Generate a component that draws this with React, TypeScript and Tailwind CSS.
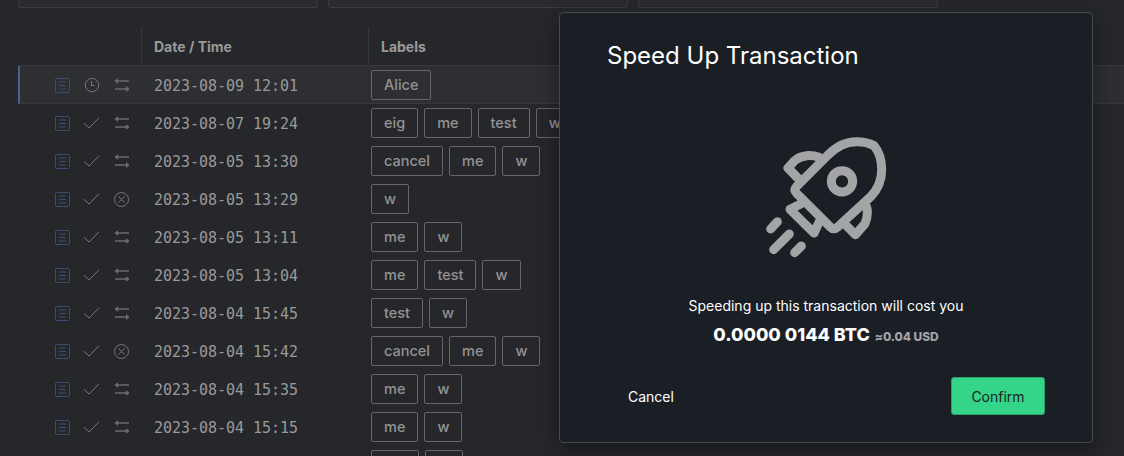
import React from "react";

type Kind = "swap" | "canceled";
interface Tx {
  time: string;
  labels: string[];
  kind: Kind;
  pending?: boolean;
}

const transactions: Tx[] = [
  { time: "2023-08-09 12:01", labels: ["Alice"], kind: "swap", pending: true },
  { time: "2023-08-07 19:24", labels: ["eig", "me", "test", "w"], kind: "swap" },
  { time: "2023-08-05 13:30", labels: ["cancel", "me", "w"], kind: "swap" },
  { time: "2023-08-05 13:29", labels: ["w"], kind: "canceled" },
  { time: "2023-08-05 13:11", labels: ["me", "w"], kind: "swap" },
  { time: "2023-08-05 13:04", labels: ["me", "test", "w"], kind: "swap" },
  { time: "2023-08-04 15:45", labels: ["test", "w"], kind: "swap" },
  { time: "2023-08-04 15:42", labels: ["cancel", "me", "w"], kind: "canceled" },
  { time: "2023-08-04 15:35", labels: ["me", "w"], kind: "swap" },
  { time: "2023-08-04 15:15", labels: ["me", "w"], kind: "swap" },
];

const iconClass = "block size-4 shrink-0";

function NoteIcon() {
  return (
    <svg className={iconClass} viewBox="0 0 16 16" fill="none" stroke="#384e76">
      <rect x="0.5" y="0.5" width="14" height="14" rx="1" />
      <path d="M4 7.5h7" />
      <path d="M4 4h7M4 11h7" stroke="#2f3b52" strokeWidth="2" />
    </svg>
  );
}

function ClockIcon() {
  return (
    <svg className={iconClass} viewBox="0 0 16 16" fill="none" stroke="#77777a">
      <circle cx="8" cy="7" r="6.7" />
      <path d="M7.5 3v4.5h3" />
    </svg>
  );
}

function CheckIcon() {
  return (
    <svg className={iconClass} viewBox="0 0 16 16" fill="none" stroke="#77777a">
      <path d="M0 7.2 5 12 15 1.8" />
    </svg>
  );
}

function SwapIcon() {
  return (
    <svg className={iconClass} viewBox="0 0 16 16" fill="none" stroke="#6b6b6e">
      <path d="M15 3H1.5M1 11H14.5" strokeWidth="1.4" />
      <path d="M4 0V6L0.5 3ZM12 8V14L15.5 11Z" fill="#6b6b6e" stroke="none" />
    </svg>
  );
}

function CanceledIcon() {
  return (
    <svg className={iconClass} viewBox="0 0 16 16" fill="none" stroke="#77777a">
      <circle cx="7.5" cy="7.5" r="7" />
      <path d="M4.2 4.2l6.6 6.6M10.8 4.2l-6.6 6.6" />
    </svg>
  );
}

function Rocket() {
  return (
    <svg
      className="block size-[121px]"
      viewBox="78 50 363 363"
      fill="none"
      stroke="#a3a4a6"
      strokeWidth="27"
      strokeLinecap="round"
      strokeLinejoin="round"
    >
      <path d="M170 198 262 106C290 76 320 64 350 64C370 64 388 68 402 76C418 95 425 120 425 148C425 180 415 205 393 228L293 320Q281 330 271 320L170 219Q160 208 170 198Z" />
      <circle cx="306" cy="183" r="32" />
      <path d="M237 111C215 103 185 103 165 120L144 143 176 176" />
      <path d="M375 250C385 265 384 290 375 310L346 343 316 313" />
      <path d="M182 251 150 267 222 338 238 304" />
      <path d="M92 326 112 304M101 388 148 341M164 397 184 377" />
    </svg>
  );
}

function Row({ tx }: { tx: Tx }) {
  return (
    <div
      className={
        tx.pending
          ? "flex h-[38px] shrink-0 items-center border-b border-l-2 border-b-[#37383c] border-l-[#466192] bg-[#2e2f33] pl-[35px]"
          : "flex h-[38px] shrink-0 items-center border-l-2 border-transparent pl-[35px]"
      }
    >
      <div className={tx.pending ? "flex w-[99px] gap-[13px] pt-[3px]" : "flex w-[99px] gap-[13px] pt-0.5"}>
        <NoteIcon />
        {tx.pending ? <ClockIcon /> : <CheckIcon />}
        <span className="pl-px">{tx.kind === "swap" ? <SwapIcon /> : <CanceledIcon />}</span>
      </div>
      <div className="w-[217px] pt-[3px] font-['DejaVu_Sans_Mono',monospace] text-[15px] tracking-[-0.03px] whitespace-pre text-[#999a9a]">
        {tx.time}
      </div>
      <div className="flex gap-1.5">
        {tx.labels.map((label) => (
          <span
            key={label}
            className="flex h-[30px] items-center rounded-[2px] border border-[#66676a] px-3 pt-px text-[14.5px] leading-none font-medium text-[#939394]"
          >
            {label}
          </span>
        ))}
      </div>
    </div>
  );
}

export default function App() {
  return (
    <div className="relative flex h-[456px] w-[1124px] flex-col overflow-hidden bg-[#26272b] pl-[18px] font-['Inter',sans-serif]">
      <div className="flex h-2 shrink-0 gap-2.5">
        <div className="w-[300px] rounded-b-[3px] border border-t-0 border-[#3b3c40] bg-[#2a2b2f]" />
        <div className="w-[300px] rounded-b-[3px] border border-t-0 border-[#3b3c40] bg-[#2a2b2f]" />
        <div className="w-[300px] rounded-b-[3px] border border-t-0 border-[#3b3c40] bg-[#2a2b2f]" />
      </div>
      <div className="mt-5 flex h-[38px] shrink-0 border-b border-[#37383c] text-[14px] font-bold text-[#999a9a]">
        <div className="w-[123px]" />
        <div className="flex w-[227px] items-center border-l border-[#37383c] pl-3">Date / Time</div>
        <div className="flex items-center border-l border-[#37383c] pl-3">Labels</div>
      </div>
      {transactions.map((tx) => (
        <Row key={tx.time} tx={tx} />
      ))}
      <div className="flex shrink-0 gap-1.5 pt-1 pl-[353px]">
        <span className="h-[30px] w-12 rounded-[2px] border border-[#66676a]" />
        <span className="h-[30px] w-[38px] rounded-[2px] border border-[#66676a]" />
      </div>

      <div
        role="dialog"
        className="absolute top-3 left-[559px] flex h-[431px] w-[534px] flex-col rounded-[4px] border border-[#47484b] bg-[#1a1e25] px-[47px] text-white shadow-[0_8px_24px_rgba(0,0,0,0.4)]"
      >
        <h1 className="mt-[27px] text-[24px] leading-8">Speed Up Transaction</h1>
        <div className="mt-[65px] flex justify-center">
          <Rocket />
        </div>
        <p className="mt-[38px] text-center text-[14px] leading-5">Speeding up this transaction will cost you</p>
        <p className="mt-[7px] flex items-baseline justify-center gap-[5px] text-[18px] leading-6 font-extrabold">
          0.0000 0144 BTC
          <span className="text-[12px] leading-none font-extrabold tracking-[-0.07px] text-[#a3a4a6]">≈0.04 USD</span>
        </p>
        <div className="mt-[30px] flex h-[38px] items-center justify-between">
          <button className="px-[21px] text-[14px]">Cancel</button>
          <button className="h-[38px] w-[94px] rounded-[3px] border border-[#2b9f69] bg-[#34d489] text-[14px] text-[#14261f]">
            Confirm
          </button>
        </div>
      </div>
    </div>
  );
}
